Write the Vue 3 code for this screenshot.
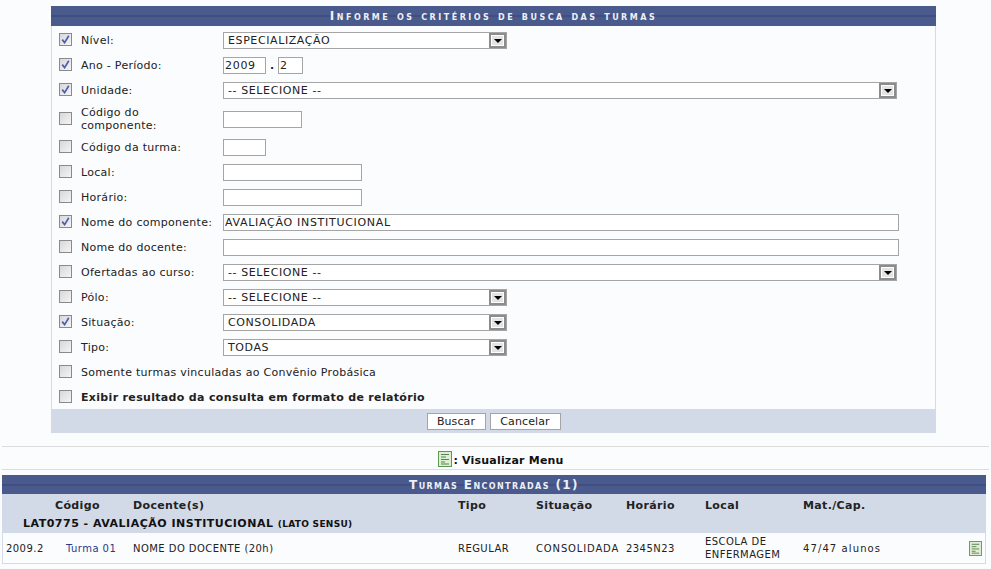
<script setup>
const rows = [
  { label: 'Nível:', checked: true, type: 'select', value: 'ESPECIALIZAÇÃO', w: 284 },
  { label: 'Ano - Período:', checked: true, type: 'period' },
  { label: 'Unidade:', checked: true, type: 'select', value: '-- SELECIONE --', w: 674 },
  { label: 'Código do componente:', checked: false, type: 'input', value: '', w: 79, tall: true },
  { label: 'Código da turma:', checked: false, type: 'input', value: '', w: 43 },
  { label: 'Local:', checked: false, type: 'input', value: '', w: 139 },
  { label: 'Horário:', checked: false, type: 'input', value: '', w: 139 },
  { label: 'Nome do componente:', checked: true, type: 'input', value: 'AVALIAÇÃO INSTITUCIONAL', w: 676 },
  { label: 'Nome do docente:', checked: false, type: 'input', value: '', w: 676 },
  { label: 'Ofertadas ao curso:', checked: false, type: 'select', value: '-- SELECIONE --', w: 674 },
  { label: 'Pólo:', checked: false, type: 'select', value: '-- SELECIONE --', w: 284 },
  { label: 'Situação:', checked: true, type: 'select', value: 'CONSOLIDADA', w: 284 },
  { label: 'Tipo:', checked: false, type: 'select', value: 'TODAS', w: 284 },
]
</script>

<template>
  <div class="page">
    <section class="form">
      <h2 class="caption first">Informe os critérios de busca das turmas</h2>
      <div class="body">
        <div v-for="r in rows" :key="r.label" class="row" :class="{ tall: r.tall }">
          <span class="cb" :class="{ on: r.checked }">
            <svg v-if="r.checked" width="9" height="9" viewBox="0 0 9 9"><path d="M1.2 4.6 L3.6 7.6 L7.8 .8" fill="none" stroke="#4a5fb0" stroke-width="1.7"/></svg>
          </span>
          <label class="lbl">{{ r.label }}</label>
          <div v-if="r.type === 'select'" class="sel" :style="{ width: r.w + 'px' }">
            <span>{{ r.value }}</span>
            <i class="arrow"><b></b></i>
          </div>
          <div v-else-if="r.type === 'period'" class="period">
            <input class="inp" style="width: 43px" value="2009" />
            <span class="dot">.</span>
            <input class="inp" style="width: 25px" value="2" />
          </div>
          <input v-else class="inp" :style="{ width: r.w + 'px' }" :value="r.value" />
        </div>
        <div class="row wide">
          <span class="cb"></span>
          <label class="lbl">Somente turmas vinculadas ao Convênio Probásica</label>
        </div>
        <div class="row wide">
          <span class="cb"></span>
          <label class="lbl strong">Exibir resultado da consulta em formato de relatório</label>
        </div>
      </div>
      <div class="foot">
        <button class="btn b1">Buscar</button>
        <button class="btn b2">Cancelar</button>
      </div>
    </section>

    <div class="legend">
      <svg class="doc" width="14" height="16" viewBox="0 0 14 16"><rect x=".5" y=".5" width="13" height="15" fill="#dcefd2" stroke="#5c9a4e"/><path d="M3 3.5h8M3 6h5M3 8.5h8M3 11h4M3 13h8" stroke="#5f7f58" stroke-width="1"/></svg>
      <b>: Visualizar Menu</b>
    </div>

    <section class="results">
      <h2 class="caption">Turmas Encontradas (1)</h2>
      <div class="thead cols">
        <span></span><span>Código</span><span>Docente(s)</span><span>Tipo</span><span>Situação</span><span>Horário</span><span>Local</span><span>Mat./Cap.</span><span></span>
      </div>
      <div class="group">LAT0775 - AVALIAÇÃO INSTITUCIONAL <small>(LATO SENSU)</small></div>
      <div class="tr cols">
        <span>2009.2</span>
        <span class="link">Turma 01</span>
        <span>NOME DO DOCENTE (20h)</span>
        <span>REGULAR</span>
        <span class="sit">CONSOLIDADA</span>
        <span>2345N23</span>
        <span class="loc">ESCOLA DE ENFERMAGEM</span>
        <span class="cap">47/47 alunos</span>
        <svg class="doc end" width="13" height="15" viewBox="0 0 14 16"><rect x=".5" y=".5" width="13" height="15" fill="#dcefd2" stroke="#5c9a4e"/><path d="M3 3.5h8M3 6h5M3 8.5h8M3 11h4M3 13h8" stroke="#5f7f58" stroke-width="1"/></svg>
      </div>
    </section>
  </div>
</template>

<style>
html, body { margin: 0; background: #fbfcfe; }
</style>

<style scoped>
.page {
  width: 991px;
  height: 569px;
  overflow: hidden;
  box-sizing: border-box;
  padding-top: 6px;
  font: 11px "DejaVu Sans", Verdana, sans-serif;
  color: #222;
  background: #fbfcfe;
}
.form {
  width: 885px;
  margin-left: 51px;
}
.caption {
  height: 20px;
  margin: 0;
  background: linear-gradient(#4a5a8c 0 9px, #3f4f80 9px 11px, #4a5a8c 11px);
  color: #eef0f6;
  font: bold 12px/21px "DejaVu Sans", Verdana, sans-serif;
  font-variant: small-caps;
  letter-spacing: 1.4px;
  text-align: center;
}
.caption.first {
  letter-spacing: 2.5px;
}
.body {
  border-left: 1px solid #d3dae8;
  border-right: 1px solid #d3dae8;
  padding-top: 2px;
}
.row {
  display: flex;
  align-items: center;
  height: 25px;
  padding-left: 7px;
}
.row.tall {
  height: 32px;
}
.cb {
  flex: none;
  display: flex;
  align-items: center;
  justify-content: center;
  box-sizing: border-box;
  width: 13px;
  height: 13px;
  margin-top: -2px;
  border: 1px solid #8a8a8a;
  background: linear-gradient(135deg, #d8d8d8, #f4f4f4);
}
.lbl {
  flex: none;
  box-sizing: border-box;
  width: 151px;
  padding-left: 9px;
  line-height: 13px;
  letter-spacing: .28px;
}
.row.tall .lbl {
  padding-right: 60px;
}
.wide .lbl {
  width: auto;
}
.strong {
  font-weight: bold;
  letter-spacing: .33px;
}
.sel {
  box-sizing: border-box;
  height: 17px;
  border: 1px solid #a5a5a5;
  background: #fff;
  display: flex;
  align-items: center;
  justify-content: space-between;
  padding-left: 4px;
  letter-spacing: .6px;
  color: #222;
}
.arrow {
  box-sizing: border-box;
  width: 17px;
  height: 15px;
  border: 2px solid #8c8c8c;
  background: #e4e4e4;
  box-shadow: inset 0 0 0 1px #fff;
  display: flex;
  align-items: center;
  justify-content: center;
}
.arrow b {
  width: 0;
  height: 0;
  margin-top: 1px;
  border-left: 4px solid transparent;
  border-right: 4px solid transparent;
  border-top: 4px solid #000;
}
.inp {
  box-sizing: border-box;
  height: 17px;
  padding: 0 1px;
  border: 1px solid #a5a5a5;
  background: #fff;
  font: 11px "DejaVu Sans", Verdana, sans-serif;
  letter-spacing: .7px;
  color: #222;
  outline: none;
}
.period {
  display: flex;
  align-items: center;
}
.dot {
  width: 12px;
  text-align: center;
  font-weight: bold;
}
.foot {
  display: flex;
  justify-content: center;
  align-items: center;
  gap: 4px;
  height: 24px;
  margin-top: -1px;
  background: #d2d9e7;
}
.btn {
  box-sizing: border-box;
  height: 17px;
  padding: 0;
  border: 1px solid #a5a5a5;
  background: #fff;
  font: 11px "DejaVu Sans", Verdana, sans-serif;
  letter-spacing: .1px;
  color: #222;
}
.b1 { width: 59px; }
.b2 { width: 71px; }
.legend {
  display: flex;
  align-items: center;
  justify-content: center;
  gap: 1px;
  box-sizing: border-box;
  height: 24px;
  margin: 13px 2px 5px;
  padding: 2px 0 0 11px;
  border-top: 1px solid #dcdcdc;
  border-bottom: 1px solid #dcdcdc;
  color: #111;
  letter-spacing: .2px;
}
.legend b {
  padding-top: 2px;
}
.results {
  width: 984px;
  margin-left: 2px;
  border-bottom: 1px solid #d3dae8;
}
.results .caption {
  height: 19px;
  line-height: 20px;
}
.cols {
  display: grid;
  grid-template-columns: 53px 78px 325px 78px 90px 79px 98px 164px 19px;
  align-items: center;
}
.thead {
  box-sizing: border-box;
  height: 20px;
  padding-top: 2px;
  background: #d2d9e7;
  font-weight: bold;
  color: #222;
  letter-spacing: .35px;
}
.group {
  box-sizing: border-box;
  height: 19px;
  line-height: 20px;
  padding-left: 21px;
  background: #d2d9e7;
  font-weight: bold;
  color: #111;
  letter-spacing: .5px;
}
.group small {
  font-size: 9px;
  letter-spacing: .3px;
}
.tr {
  height: 30px;
  padding-left: 3px;
  border-left: 1px solid #d3dae8;
  border-right: 1px solid #d3dae8;
  box-sizing: border-box;
  grid-template-columns: 60px 67px 325px 78px 90px 79px 98px 164px 19px;
  font-size: 10px;
  letter-spacing: .45px;
}
.link { color: #283a82; }
.sit { letter-spacing: .85px; }
.cap { letter-spacing: 1.1px; }
.loc { line-height: 13px; padding-right: 10px; }
.doc { display: block; }
.end { margin-left: 2px; }
</style>
